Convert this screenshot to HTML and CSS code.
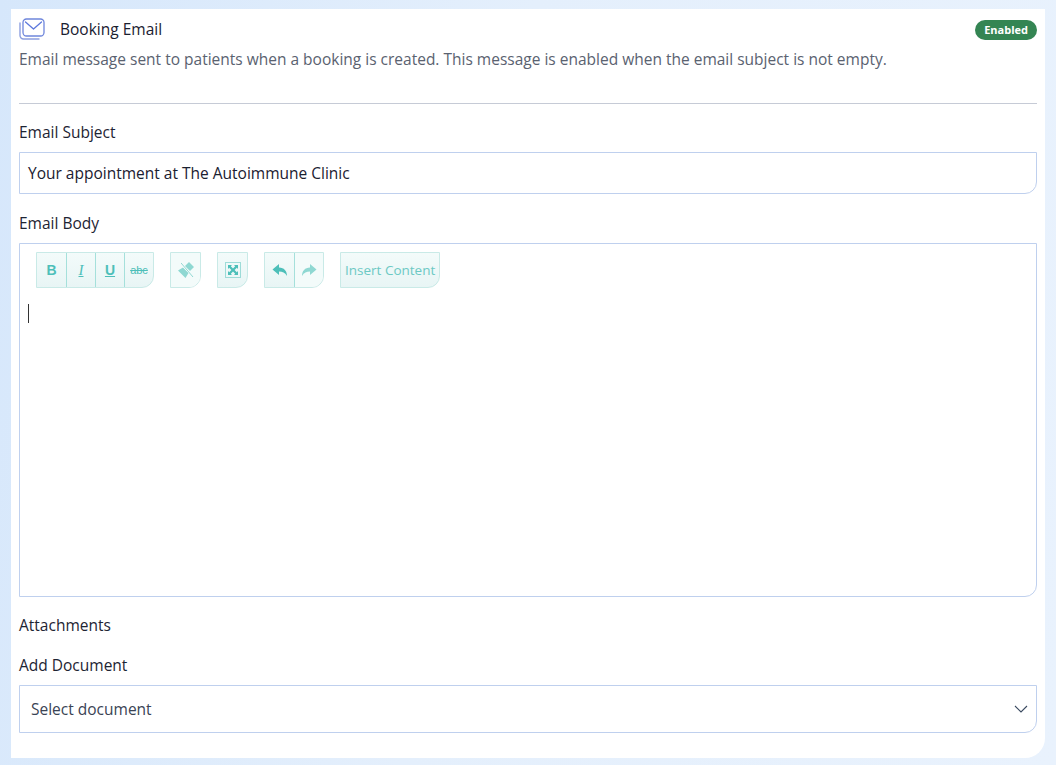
FILE: index.html
```html
<!DOCTYPE html>
<html lang="en">
<head>
<meta charset="utf-8">
<title>Booking Email</title>
<link rel="stylesheet" href="styles.css">
</head>
<body>
<main class="card">
  <header class="head">
    <svg class="mail" width="26" height="22" viewBox="0 0 26 22" fill="none">
      <path d="M1 5v12.5A3.5 3.5 0 0 0 4.500 21H20" stroke="#8d9fe0" stroke-width="1.4" stroke-linecap="round"/>
      <rect x="4" y="1" width="21" height="17" rx="3.500" stroke="#6f86dc" stroke-width="1.300"/>
      <path d="M6.500 4l8 7 8-7" stroke="#5d78dc" stroke-width="1.300" stroke-linecap="round" stroke-linejoin="round"/>
    </svg>
    <h1 class="title">Booking Email</h1>
    <span class="badge">Enabled</span>
  </header>
  <p class="desc">Email message sent to patients when a booking is created. This message is enabled when the email subject is not empty.</p>
  <hr class="rule">
  <label class="label label-subject">Email Subject</label>
  <div class="input">Your appointment at The Autoimmune Clinic</div>
  <label class="label label-body">Email Body</label>
  <div class="editor">
    <div class="toolbar">
      <div class="group">
        <button class="tool tool-b">B</button>
        <button class="tool tool-i">I</button>
        <button class="tool tool-u">U</button>
        <button class="tool tool-s">abc</button>
      </div>
      <div class="group">
        <button class="tool faded">
          <svg width="18" height="18" viewBox="0 0 18 18"><path d="M1 9.500l5-3 5.500 5.500-3 5z M8 5l4-4 5 5-4 4z" fill="#8fd8d2"/><path d="M3 2l13 14" stroke="#fff" stroke-width="1"/><path d="M4 2l12 14" stroke="#8fd8d2" stroke-width="1"/></svg>
        </button>
      </div>
      <div class="group">
        <button class="tool">
          <svg width="16" height="16" viewBox="0 0 16 16"><rect x=".5" y=".5" width="15" height="15" fill="none" stroke="#4dbfb9" stroke-dasharray="1 1"/><path d="M3 3h4L5.800 4.200 8 6.400l2.200-2.200L9 3h4v4l-1.200-1.200L9.600 8l2.200 2.200L13 9v4H9l1.200-1.200L8 9.600l-2.200 2.200L7 13H3V9l1.200 1.200L6.400 8 4.200 5.800 3 7z" fill="#4dbfb9"/></svg>
        </button>
      </div>
      <div class="group">
        <button class="tool">
          <svg width="16" height="14" viewBox="0 0 16 14"><path d="M7 1L0.500 6.500 7 12V8.500c3.500 0 6 1 8 4.500 0-5-3-8.500-8-8.500z" fill="#4dbfb9"/></svg>
        </button>
        <button class="tool faded">
          <svg width="16" height="14" viewBox="0 0 16 14"><path d="M9 1l6.500 5.500L9 12V8.500c-3.500 0-6 1-8 4.500 0-5 3-8.500 8-8.500z" fill="#8fd8d2"/></svg>
        </button>
      </div>
      <div class="group">
        <button class="tool tool-text">Insert Content</button>
      </div>
    </div>
    <div class="caret"></div>
  </div>
  <div class="label label-attach">Attachments</div>
  <label class="label label-add">Add Document</label>
  <div class="select">
    <span>Select document</span>
    <svg width="14" height="8" viewBox="0 0 14 8" fill="none"><path d="M1 1l6 6 6-6" stroke="#3a4a60" stroke-width="1.100"/></svg>
  </div>
</main>
</body>
</html>
```
FILE: styles.css
```css
* { box-sizing: border-box; }
html, body { height: 100%; }
body {
  margin: 0;
  padding: 9px 11px 7px 11px;
  background: linear-gradient(100deg, #d6e7fb 0%, #e4effc 45%, #e9f2fd 100%);
  font-family: "Open Sans", "Noto Sans", sans-serif;
  color: #1d2433;
  overflow: hidden;
}
.card {
  height: 749px;
  background: #fff;
  border-bottom-right-radius: 20px;
  padding: 9px 8px 0;
}
.head {
  display: flex;
  align-items: center;
  height: 22px;
}
.mail { flex: none; }
.title {
  margin: 0 0 0 15px;
  font-size: 15.500px;
  font-weight: 400;
  color: #1a2030;
  flex: 1;
}
.badge {
  background: #348553;
  color: #fff;
  font-size: 11px;
  font-weight: 700;
  line-height: 20px;
  height: 20px;
  padding: 0 9px;
  border-radius: 10px;
  margin-top: 2px;
}
.desc {
  margin: 8px 0 0;
  font-size: 15.500px;
  line-height: 22px;
  color: #5a6270;
}
.rule {
  margin: 33px 0 0;
  border: 0;
  border-top: 1px solid #c6cbd6;
}
.label {
  display: block;
  font-size: 15.500px;
  line-height: 22px;
  color: #1d2433;
}
.label-subject { margin-top: 17px; }
.input {
  margin-top: 9px;
  height: 42px;
  border: 1px solid #bfd0ee;
  border-bottom-right-radius: 12px;
  padding: 0 8px;
  font-size: 15.500px;
  line-height: 40px;
  color: #1a2030;
}
.label-body { margin-top: 18px; }
.editor {
  margin-top: 9px;
  height: 354px;
  border: 1px solid #bfd0ee;
  border-bottom-right-radius: 12px;
  padding: 8px 8px 0;
}
.toolbar {
  display: flex;
  gap: 16px;
  padding-left: 8px;
}
.group {
  display: flex;
  height: 36px;
  border: 1px solid #c9eae7;
  border-bottom-right-radius: 12px;
  background: linear-gradient(180deg, #f3fbfa, #e8f5f5);
  overflow: hidden;
}
.tool {
  display: flex;
  align-items: center;
  justify-content: center;
  width: 29px;
  padding: 0;
  border: 0;
  border-left: 1px solid #a5e0db;
  background: none;
  color: #4dbfb9;
  font-family: "Liberation Sans", sans-serif;
  font-size: 13px;
}
.tool:first-child { border-left: 0; }
.tool.faded { background: #f3fbfa; }
.tool-b { font-weight: 700; font-size: 14px; }
.tool-i { font-style: italic; font-family: "Liberation Serif", serif; font-size: 15px; text-decoration: underline; text-decoration-thickness: 0; }
.tool-u { text-decoration: underline; font-weight: 700; font-size: 14px; }
.tool-s { text-decoration: line-through; font-size: 11px; }
.tool-text {
  width: auto;
  padding: 0 4px;
  font-family: "Open Sans", sans-serif;
  font-size: 13.500px;
  color: #6cc9c4;
}
.caret {
  width: 1px;
  height: 19px;
  margin-top: 16px;
  background: #333;
}
.label-attach { margin-top: 17px; }
.label-add { margin-top: 18px; }
.select {
  margin-top: 9px;
  display: flex;
  align-items: center;
  justify-content: space-between;
  height: 48px;
  border: 1px solid #bfd0ee;
  border-bottom-right-radius: 12px;
  padding: 0 8px 0 11px;
  font-size: 15.500px;
  color: #3a4354;
}
```
